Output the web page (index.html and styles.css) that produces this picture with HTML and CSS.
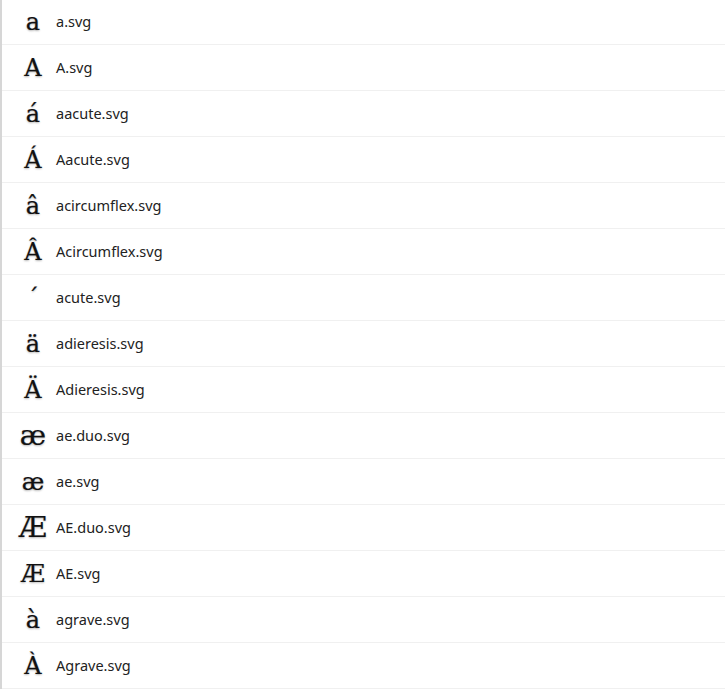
FILE: index.html
```html
<!DOCTYPE html>
<html>
<head>
<meta charset="utf-8">
<link rel="stylesheet" href="styles.css">
</head>
<body>
<div class="panel">
  <ul class="list">
    <li class="row"><span class="glyph">a</span><span class="name">a.svg</span></li>
    <li class="row"><span class="glyph">A</span><span class="name">A.svg</span></li>
    <li class="row"><span class="glyph">á</span><span class="name">aacute.svg</span></li>
    <li class="row"><span class="glyph">Á</span><span class="name">Aacute.svg</span></li>
    <li class="row"><span class="glyph">â</span><span class="name">acircumflex.svg</span></li>
    <li class="row"><span class="glyph">Â</span><span class="name">Acircumflex.svg</span></li>
    <li class="row"><span class="glyph">´</span><span class="name">acute.svg</span></li>
    <li class="row"><span class="glyph">ä</span><span class="name">adieresis.svg</span></li>
    <li class="row"><span class="glyph">Ä</span><span class="name">Adieresis.svg</span></li>
    <li class="row"><span class="glyph wide">æ</span><span class="name">ae.duo.svg</span></li>
    <li class="row"><span class="glyph">æ</span><span class="name">ae.svg</span></li>
    <li class="row"><span class="glyph wide">Æ</span><span class="name">AE.duo.svg</span></li>
    <li class="row"><span class="glyph">Æ</span><span class="name">AE.svg</span></li>
    <li class="row"><span class="glyph">à</span><span class="name">agrave.svg</span></li>
    <li class="row"><span class="glyph">À</span><span class="name">Agrave.svg</span></li>
  </ul>
  <div class="footer"></div>
</div>
</body>
</html>
```
FILE: styles.css
```css
html, body {
  margin: 0;
  padding: 0;
  background: #ffffff;
}
.panel {
  height: 689px;
  display: flex;
  flex-direction: column;
  border-left: 2px solid #d6d6d6;
  box-sizing: border-box;
  overflow: hidden;
}
.list {
  list-style: none;
  margin: -1px 0 0 0;
  padding: 0;
  flex: 1;
}
.row {
  height: 45px;
  border-bottom: 1px solid #f0f0f0;
  display: flex;
  align-items: center;
}
.glyph {
  width: 46px;
  margin-left: 8px;
  text-align: center;
  font-family: "DejaVu Serif", serif;
  font-size: 24px;
  line-height: 1;
  color: #111;
  -webkit-text-stroke: 0.2px #111;
  text-shadow: 0 1px 2px rgba(0,0,0,0.3);
}
.glyph.wide {
  font-size: 28px;
}
.name {
  font-family: "Noto Sans", sans-serif;
  font-size: 14.5px;
  color: #222;
  padding-bottom: 2px;
}
.footer {
  height: 2px;
  background: #9a9a9a;
  border-top: 1px solid #e0e0e0;
}
```
